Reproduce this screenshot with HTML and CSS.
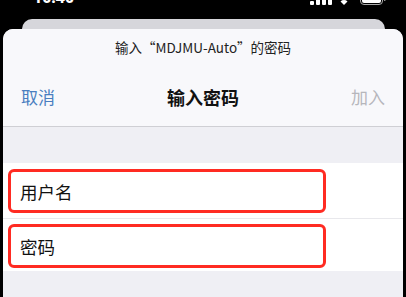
FILE: index.html
```html
<!DOCTYPE html>
<html lang="zh">
<head>
<meta charset="utf-8">
<link rel="stylesheet" href="styles.css">
</head>
<body>
<div class="screen">
  <div class="status">
    <span class="time">10:40</span>
    <div class="status-icons">
      <svg class="signal" width="22" height="12" viewBox="0 0 22 12"><rect x="0" y="8" width="4" height="4" rx="1" fill="#fff"/><rect x="6" y="5" width="4" height="7" rx="1" fill="#fff"/><rect x="12" y="2" width="4" height="10" rx="1" fill="#fff"/><rect x="18" y="0" width="4" height="12" rx="1" fill="#fff"/></svg>
      <svg class="wifi" width="12" height="10" viewBox="0 0 12 10"><path d="M6 10 L2.5 6.5 A5 5 0 0 1 9.5 6.5 Z" fill="#fff"/></svg>
      <svg class="battery" width="26" height="13" viewBox="0 0 26 13"><rect x="0.5" y="0.5" width="22" height="12" rx="3.5" fill="none" stroke="#aaa"/><rect x="2" y="2" width="19" height="9" rx="2" fill="#fff"/><rect x="24" y="4" width="1.5" height="5" rx="0.7" fill="#aaa"/></svg>
    </div>
  </div>
  <div class="back-card"></div>
  <div class="sheet">
    <div class="header">
      <div class="subtitle">输入“MDJMU-Auto”的密码</div>
      <div class="nav">
        <span class="nav-btn cancel">取消</span>
        <span class="nav-title">输入密码</span>
        <span class="nav-btn join">加入</span>
      </div>
    </div>
    <div class="gap"></div>
    <div class="group">
      <div class="row">
        <div class="field">用户名</div>
      </div>
      <div class="row row-second">
        <div class="field">密码</div>
      </div>
    </div>
  </div>
</div>
</body>
</html>
```

FILE: styles.css
```css
* { box-sizing: border-box; }
html, body { margin: 0; padding: 0; }
body {
  background: #000;
  width: 406px;
  height: 297px;
  overflow: hidden;
  font-family: "Noto Sans", "Noto Sans CJK SC", sans-serif;
}
.screen { display: flex; flex-direction: column; height: 297px; }
.status {
  height: 19px;
  display: flex;
  justify-content: space-between;
  align-items: flex-start;
  padding: 0 20px 0 33px;
  overflow: hidden;
  flex: none;
}
.time {
  color: #fff;
  font-weight: 700;
  font-size: 16px;
  line-height: 16px;
  margin-top: -11px;
  font-family: "Noto Sans", sans-serif;
}
.status-icons {
  display: flex;
  align-items: flex-end;
  gap: 6px;
  margin-top: -8px;
}
.battery { margin-left: 4px; }
.back-card {
  flex: none;
  height: 10px;
  margin: 0 21px 0 22px;
  background: #d6d6db;
  border-radius: 11px 11px 0 0;
}
.sheet {
  flex: 1;
  margin: 0 3px 0 3px;
  background: #efeff4;
  border-radius: 10px 10px 0 0;
  overflow: hidden;
  display: flex;
  flex-direction: column;
}
.header {
  background: #f8f8fb;
  border-bottom: 1px solid #cfcfd4;
  height: 98px;
  padding-top: 8px;
}
.subtitle {
  text-align: center;
  font-size: 13.5px;
  line-height: 20px;
  color: #222;
  font-family: "Noto Sans CJK SC", sans-serif;
}
.nav {
  display: flex;
  justify-content: space-between;
  align-items: center;
  margin-top: 28px;
  padding: 0 18px 0 18px;
  height: 24px;
  font-family: "Noto Sans CJK SC", sans-serif;
}
.nav-btn { font-size: 17px; line-height: 24px; }
.cancel { color: #4a7ec0; }
.join { color: #b6b6bb; }
.nav-title {
  font-size: 18px;
  font-weight: 700;
  color: #111;
  line-height: 24px;
}
.gap { height: 36px; flex: none; }
.group {
  background: #fff;
  display: flex;
  flex-direction: column;
}
.row {
  height: 55px;
  padding: 6px 0 0 5px;
}
.row-second {
  border-top: 1px solid #e8e8ec;
  height: 53px;
  padding-top: 5px;
}
.field {
  width: 318px;
  height: 44px;
  border: 3px solid #ff2b22;
  border-radius: 6px;
  display: flex;
  align-items: center;
  padding-left: 9px;
  font-size: 17.5px;
  color: #111;
  font-family: "Noto Sans CJK SC", sans-serif;
}
```
